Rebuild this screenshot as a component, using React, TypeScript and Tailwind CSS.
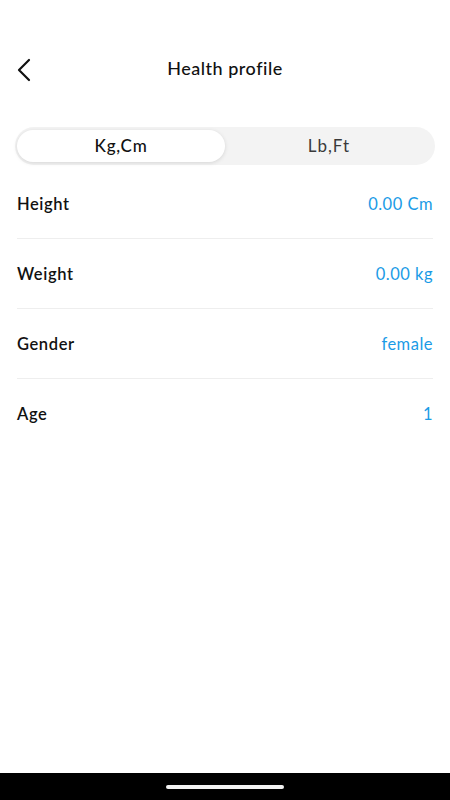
import React from "react";

const rows = [
  { label: "Height", value: "0.00 Cm" },
  { label: "Weight", value: "0.00 kg" },
  { label: "Gender", value: "female" },
  { label: "Age", value: "1" },
];

export default function App() {
  return (
    <div
      className="w-[450px] h-[800px] bg-white flex flex-col overflow-hidden"
      style={{ fontFamily: "Lato, 'Noto Sans', sans-serif" }}
    >
      <div className="h-[38px]" />
      <div className="relative h-[60px] flex items-center justify-center">
        <svg
          className="absolute left-[16px] top-[20px]"
          width="16"
          height="24"
          viewBox="0 0 16 24"
          fill="none"
        >
          <path d="M13 2 L3 12 L13 22" stroke="#111" strokeWidth="2.2" strokeLinecap="round" strokeLinejoin="round" />
        </svg>
        <span className="text-[18px] font-medium text-[#111] tracking-[0.5px]">Health profile</span>
      </div>
      <div className="h-[29px]" />
      <div className="mx-[15px] h-[38px] rounded-full bg-[#f3f3f3] flex items-center px-[2px]">
        <div className="flex-1 h-[32px] rounded-full bg-white shadow-[0_1px_4px_rgba(0,0,0,0.12)] flex items-center justify-center text-[17px] text-[#111] font-medium tracking-[0.8px]">
          Kg,Cm
        </div>
        <div className="flex-1 h-[32px] flex items-center justify-center text-[17px] text-[#3a3a3a] font-normal tracking-[1px]">
          Lb,Ft
        </div>
      </div>
      <div className="mx-[17px] flex flex-col mt-[4px]">
        {rows.map((r, i) => (
          <div
            key={r.label}
            className={`h-[70px] flex items-center justify-between pt-[1px] ${i < rows.length - 1 ? "border-b border-[#eeeeee]" : ""}`}
          >
            <span className="text-[16.5px] font-semibold text-[#111] tracking-[0.6px]">{r.label}</span>
            <span className="text-[16.5px] font-normal text-[#1a9be6] tracking-[0.5px]">{r.value}</span>
          </div>
        ))}
      </div>
      <div className="flex-1" />
      <div className="h-[27px] bg-black flex items-center justify-center">
        <div className="w-[118px] h-[4px] rounded-full bg-[#f2f2f2]" />
      </div>
    </div>
  );
}
